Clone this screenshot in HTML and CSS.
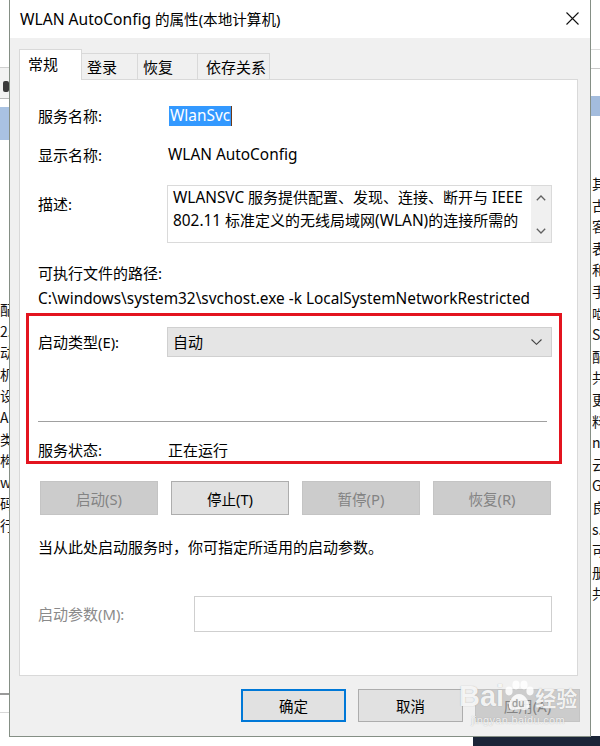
FILE: index.html
```html
<!DOCTYPE html>
<html lang="zh-CN">
<head>
<meta charset="utf-8">
<title>WLAN AutoConfig 的属性</title>
<link rel="stylesheet" href="styles.css">
</head>
<body>
<div class="desktop">
  <div class="bg-left">
    <div class="bgl-top"></div>
    <div class="bgl-tool"><span class="bgl-knob"></span></div>
    <div class="bgl-sel"></div>
    <div class="bgl-text">
      <div>配</div><div>2.1</div><div>动</div><div>机</div><div>设</div><div>AN</div><div>类</div><div>构</div><div>w</div><div>码</div><div>行</div>
    </div>
    <div class="bgl-foot"></div>
  </div>

  <div class="bg-right">
    <div class="bgr-top"></div>
    <div class="bgr-bar"></div>
    <div class="bgr-sel"></div>
    <div class="bgr-text">
      <div>其</div><div>古</div><div>客</div><div>表</div><div>和</div><div>手</div><div>啮</div><div>SV</div><div>配</div><div>共</div><div>更</div><div>料</div><div>na</div><div>云</div><div>G</div><div>良</div><div>s.</div><div>可</div><div>册</div><div>共</div>
    </div>
  </div>

  <div class="bg-dark"></div>

  <section class="dialog">
    <header class="titlebar">
      <span class="title"><span class="lat-t">WLAN AutoConfig</span> 的属性(本地计算机)</span>
      <svg class="close" width="13" height="13" viewBox="0 0 13 13"><path d="M0.5 0.5 L12.5 12.5 M12.5 0.5 L0.5 12.5" stroke="#111" stroke-width="1.1" fill="none"/></svg>
    </header>
    <div class="dlg-body">
      <nav class="tabs">
        <span class="tab active">常规</span>
        <span class="tab t2">登录</span>
        <span class="tab t3">恢复</span>
        <span class="tab t4">依存关系</span>
      </nav>
      <div class="panel">
        <div class="row r-name">
          <span class="lbl">服务名称:</span>
          <span class="val"><span class="sel lat">WlanSvc</span><span class="caret"></span></span>
        </div>
        <div class="row r-disp">
          <span class="lbl">显示名称:</span>
          <span class="val lat">WLAN AutoConfig</span>
        </div>
        <div class="row r-desc">
          <span class="lbl lbl-desc">描述:</span>
          <div class="desc">
            <div class="desc-text">
              <div><span class="lat">WLANSVC</span> 服务提供配置、发现、连接、断开与 <span class="lat">IEEE</span></div>
              <div><span class="lat">802.11</span> 标准定义的无线局域网<span class="lat">(WLAN)</span>的连接所需的</div>
            </div>
            <div class="scroll">
              <svg width="10" height="6" viewBox="0 0 10 6"><path d="M0.8 5.2 L5 1 L9.2 5.2" stroke="#606060" stroke-width="1.3" fill="none"/></svg>
              <svg width="10" height="6" viewBox="0 0 10 6"><path d="M0.8 0.8 L5 5 L9.2 0.8" stroke="#606060" stroke-width="1.3" fill="none"/></svg>
            </div>
          </div>
        </div>
        <div class="row r-exe"><span class="lbl wide">可执行文件的路径:</span></div>
        <div class="row r-path"><span class="path lat">C:\windows\system32\svchost.exe -k LocalSystemNetworkRestricted</span></div>
        <div class="row r-type">
          <span class="lbl">启动类型<span class="lat-s">(E):</span></span>
          <div class="combo">
            <span>自动</span>
            <svg width="11" height="6" viewBox="0 0 11 6"><path d="M0.5 0.5 L5.5 5.3 L10.5 0.5" stroke="#444" stroke-width="1.1" fill="none"/></svg>
          </div>
        </div>
        <div class="sep"></div>
        <div class="row r-status">
          <span class="lbl">服务状态:</span>
          <span class="val">正在运行</span>
        </div>
        <div class="btn-row">
          <button class="btn disabled">启动<span class="lat-s">(S)</span></button>
          <button class="btn">停止<span class="lat-s">(T)</span></button>
          <button class="btn disabled">暂停<span class="lat-s">(P)</span></button>
          <button class="btn disabled">恢复<span class="lat-s">(R)</span></button>
        </div>
        <div class="row r-hint">当从此处启动服务时，你可指定所适用的启动参数。</div>
        <div class="row r-param">
          <span class="lbl lbl-param">启动参数<span class="lat-s">(M):</span></span>
          <div class="input"></div>
        </div>
      </div>
      <div class="footer">
        <button class="fbtn default">确定</button>
        <button class="fbtn">取消</button>
        <button class="fbtn disabled">应用<span class="lat-s">(A)</span></button>
      </div>
    </div>
  </section>

  <div class="annot"></div>

  <div class="watermark">
    <div class="wm-main">
      <span class="wm-bai">Bai</span>
      <span class="wm-paw">
        <svg width="34" height="32" viewBox="0 0 34 32">
          <g fill="#ffffff" fill-opacity="0.85">
            <ellipse cx="7" cy="11" rx="3.6" ry="4.4"/>
            <ellipse cx="14" cy="5" rx="3.6" ry="4.4"/>
            <ellipse cx="22" cy="5" rx="3.6" ry="4.4"/>
            <ellipse cx="28" cy="11" rx="3.6" ry="4.4"/>
            <path d="M17 14 C11 14 6 22 7 27 C8 31 13 30 17 29 C21 30 26 31 27 27 C28 22 23 14 17 14 Z"/>
          </g>
          <text x="10" y="27" font-size="10" fill="#9a9a9a" font-family="Noto Sans, sans-serif">du</text>
        </svg>
      </span>
      <span class="wm-jy">经验</span>
    </div>
    <div class="wm-url">jingyan.baidu.com</div>
  </div>
</div>
</body>
</html>
```

FILE: styles.css
```css
* { box-sizing: border-box; }
html, body { margin: 0; padding: 0; }
body {
  width: 600px;
  height: 746px;
  overflow: hidden;
  background: #ffffff;
  font-family: "Noto Sans", "Noto Sans CJK SC", sans-serif;
  font-size: 15px;
  color: #000;
}
.desktop {
  position: relative;
  width: 600px;
  height: 746px;
  overflow: hidden;
  background: #ffffff;
}
.lat { font-size: 15.4px; }
.lat-s { font-size: 14.8px; }
.lat-t { font-size: 15.6px; }

/* background window, left */
.bg-left {
  position: absolute;
  left: 0;
  top: 0;
  width: 40px;
  height: 746px;
  background: #ffffff;
}
.bgl-top { height: 68px; border-bottom: 1px solid #cfcfcf; }
.bgl-tool { height: 31px; background: #f2f2f2; border-bottom: 1px solid #b9b9b9; padding: 13px 0 0 3px; }
.bgl-knob { display: block; width: 6px; height: 11px; border-radius: 2px; background: #3a3a3a; }
.bgl-sel { margin-top: 8px; height: 33px; background: #a9c2e2; }
.bgl-text {
  margin-top: 159px;
  font-size: 14px;
  line-height: 21.6px;
  color: #111;
  font-family: "Noto Sans CJK SC", sans-serif;
}
.bgl-foot { margin-top: 156px; height: 20px; border-top: 2px solid #9a9a9a; border-bottom: 1px solid #d8d8d8; }

/* background window, right */
.bg-right {
  position: absolute;
  left: 589px;
  top: 0;
  width: 11px;
  height: 746px;
  background: #ffffff;
  overflow: hidden;
}
.bgr-top { height: 50px; border-bottom: 1px solid #dcdcdc; }
.bgr-bar { height: 19px; border-bottom: 1px solid #c8c8c8; }
.bgr-sel { margin-top: 27px; height: 20px; background: #a3bcdd; }
.bgr-text {
  margin-top: 57px;
  padding-left: 3px;
  font-size: 14px;
  line-height: 21.6px;
  color: #111;
  white-space: nowrap;
  font-family: "Noto Sans CJK SC", sans-serif;
}
.bg-dark {
  position: absolute;
  left: 473px;
  top: 736px;
  width: 127px;
  height: 10px;
  background: #1b2538;
}

/* dialog */
.dialog {
  position: absolute;
  left: 9px;
  top: -1px;
  width: 582px;
  height: 738px;
  border: 1px solid #858f85;
  background: #f0f0f0;
  display: flex;
  flex-direction: column;
}
.titlebar {
  height: 38px;
  flex: none;
  background: #ffffff;
  display: flex;
  align-items: center;
  justify-content: space-between;
  padding: 0 11px 0 10px;
}
.title { font-size: 14.6px; color: #000; white-space: nowrap; }
.close { display: block; margin-top: -1px; }

.dlg-body {
  flex: 1;
  padding: 12px 12px 0 9px;
  display: flex;
  flex-direction: column;
}

.tabs {
  display: flex;
  align-items: flex-end;
  height: 30px;
  position: relative;
  z-index: 1;
}
.tab {
  height: 26px;
  background: #f0f0f0;
  border: 1px solid #d9d9d9;
  border-bottom: none;
  border-left: none;
  padding: 2px 0 0 5px;
  line-height: 22px;
  margin-bottom: 1px;
  white-space: nowrap;
}
.tab.active {
  height: 31px;
  width: 63px;
  background: #ffffff;
  border-left: 1px solid #d9d9d9;
  padding: 3px 0 0 8px;
  margin-bottom: 0;
}
.tab.t2 { width: 56px; }
.tab.t3 { width: 60px; }
.tab.t4 { width: 72px; padding-left: 8px; }

.panel {
  margin-top: -1px;
  background: #ffffff;
  border: 1px solid #d9d9d9;
  padding: 25px 25px 43px 18px;
  display: flex;
  flex-direction: column;
}

.row {
  display: flex;
  align-items: center;
  height: 22px;
  line-height: 22px;
  white-space: nowrap;
}
.lbl { width: 130px; flex: none; }
.val { display: flex; align-items: center; }
.sel {
  background: #3399ff;
  color: #ffffff;
  line-height: 20px;
  padding: 0 1px;
  margin-left: 1px;
}
.caret { display: block; width: 1px; height: 20px; background: #6b3a1a; }

.r-disp { margin-top: 17px; }
.r-desc { margin-top: 19px; height: 58px; align-items: flex-start; }
.lbl-desc { padding-top: 8px; }
.desc {
  margin-left: -1px;
  width: 386px;
  height: 58px;
  border: 1px solid #dadada;
  display: flex;
  justify-content: space-between;
  overflow: hidden;
}
.desc-text { padding-left: 5px; line-height: 22px; }
.scroll {
  width: 20px;
  flex: none;
  background: #f0f0f0;
  display: flex;
  flex-direction: column;
  align-items: center;
  justify-content: space-between;
  padding: 9px 0 8px;
}
.scroll svg { display: block; }

.r-exe { margin-top: 19px; }
.r-path { margin-top: 4px; }

.r-type { margin-top: 17px; height: 30px; }
.combo {
  margin-left: -1px;
  width: 386px;
  height: 30px;
  background: #e5e5e5;
  border: 1px solid #d0d0d0;
  display: flex;
  align-items: center;
  justify-content: space-between;
  padding: 0 9px 0 5px;
}
.combo svg { display: block; }

.sep {
  margin-top: 64px;
  width: 509px;
  height: 1px;
  background: #a0a0a0;
}
.r-status { margin-top: 17px; }

.btn-row {
  margin-top: 20px;
  margin-left: 2px;
  display: flex;
  gap: 13px;
}
.btn, .fbtn {
  font-family: inherit;
  font-size: 14.5px;
  color: #000;
  background: #e1e1e1;
  border: 1px solid #adadad;
  padding: 0;
  margin: 0;
  white-space: nowrap;
}
.btn { width: 118px; height: 34px; }
.btn.disabled, .fbtn.disabled {
  background: #cccccc;
  border-color: #c4c4c4;
  color: #838383;
}

.r-hint { margin-top: 21px; }
.r-param { margin-top: 38px; height: 36px; }
.lbl-param { width: 156px; color: #8a8a8a; }
.input {
  width: 358px;
  height: 36px;
  background: #ffffff;
  border: 1px solid #cfcfcf;
}

.footer {
  margin-top: 13px;
  margin-right: -2px;
  display: flex;
  justify-content: flex-end;
  gap: 12px;
}
.fbtn { width: 105px; height: 33px; }
.fbtn.default { border: 2px solid #0078d7; }

/* annotation overlay */
.annot {
  position: absolute;
  left: 26px;
  top: 313px;
  width: 536px;
  height: 151px;
  border: 3px solid #e3141f;
}

/* watermark overlay */
.watermark {
  position: absolute;
  left: 459px;
  top: 674px;
  display: flex;
  flex-direction: column;
  align-items: center;
  white-space: nowrap;
  color: rgba(255, 255, 255, 0.88);
  text-shadow: 0 0 1px rgba(120, 120, 120, 0.6);
}
.wm-main { display: flex; align-items: flex-end; height: 38px; }
.wm-bai { font-size: 29px; font-weight: bold; line-height: 32px; font-family: "Liberation Sans", sans-serif; }
.wm-paw svg { display: block; margin: 0 -1px 0 -2px; }
.wm-jy { font-size: 21px; line-height: 30px; font-weight: bold; font-family: "Noto Sans CJK SC", sans-serif; }
.wm-url { font-size: 11px; line-height: 16px; letter-spacing: 0.3px; font-family: "Liberation Sans", sans-serif; }
```
